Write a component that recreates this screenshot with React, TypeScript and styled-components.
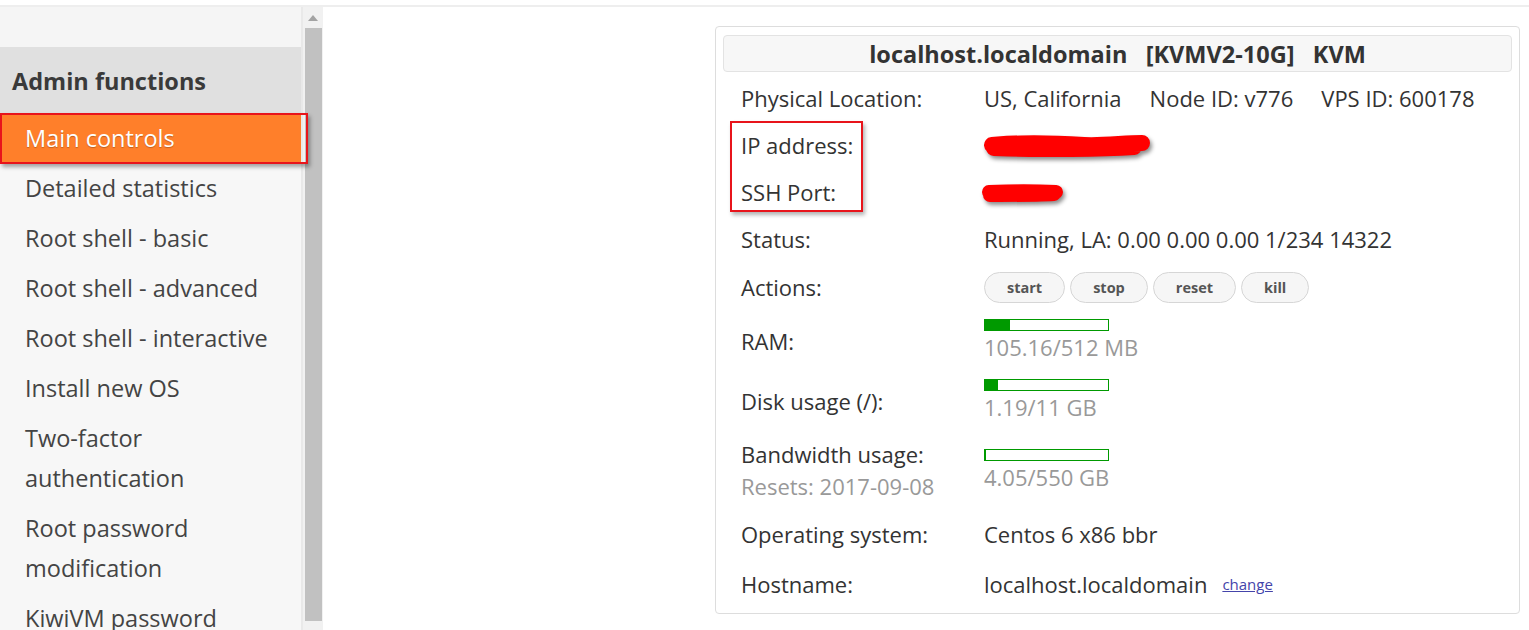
import React from 'react';
import styled, { createGlobalStyle } from 'styled-components';

const GlobalStyle = createGlobalStyle`
  html, body {
    margin: 0;
    padding: 0;
    background: #ffffff;
    overflow: hidden;
  }
  body {
    font-family: 'Open Sans', 'Noto Sans', sans-serif;
    color: #333;
  }
`;

const Page = styled.div`
  height: 630px;
  display: flex;
  flex-direction: column;
  padding-top: 5px;
  box-sizing: border-box;
`;

const Layout = styled.div`
  flex: 1;
  display: flex;
  border-top: 2px solid #eeeeee;
  overflow: hidden;
`;

const Sidebar = styled.aside`
  display: flex;
  flex-shrink: 0;
`;

const SidePanel = styled.nav`
  width: 301px;
  background: #f7f7f7;
  border-right: 2px solid #e9e9e9;
`;

const SideSpacer = styled.div`
  height: 40px;
  background: #f5f5f5;
`;

const SideHeader = styled.div`
  height: 66px;
  display: flex;
  align-items: center;
  padding: 2px 0 0 12px;
  box-sizing: border-box;
  background: #e0e0e0;
  font-size: 23.5px;
  font-weight: 700;
  color: #3a3a3a;
`;

const NavItem = styled.div<{ $active?: boolean }>`
  position: relative;
  padding: 5px 10px 5px 25px;
  line-height: 40px;
  font-size: 23.5px;
  color: ${({ $active }) => ($active ? '#ffffff' : '#444444')};
  background: ${({ $active }) => ($active ? '#ff7f2a' : 'transparent')};
  text-shadow: ${({ $active }) => ($active ? '0 1px 1px rgba(0,0,0,0.25)' : 'none')};
`;

const NavMark = styled.span`
  position: absolute;
  left: 0;
  right: -7px;
  top: 0;
  bottom: -1px;
  border: 2px solid #e8141b;
  box-shadow: 2px 3px 4px rgba(0, 0, 0, 0.35);
  pointer-events: none;
`;

const ScrollBar = styled.div`
  width: 20px;
  background: #f1f1f1;
  display: flex;
  flex-direction: column;
  align-items: center;
  padding-bottom: 9px;
`;

const ScrollArrow = styled.div`
  margin: 8px 0 7px;
  width: 0;
  height: 0;
  border-left: 5px solid transparent;
  border-right: 5px solid transparent;
  border-bottom: 6px solid #a3a3a3;
`;

const ScrollThumb = styled.div`
  flex: 1;
  width: 17px;
  margin-left: 1px;
  background: #c1c1c1;
`;

const Main = styled.main`
  flex: 1;
  display: flex;
  justify-content: flex-end;
  align-items: flex-start;
  padding: 19px 9px 0 0;
`;

const Card = styled.section`
  width: 805px;
  box-sizing: border-box;
  border: 1px solid #dddddd;
  border-radius: 4px;
  padding: 8px 7px 5px;
`;

const CardTitle = styled.h2`
  margin: 0;
  height: 37px;
  box-sizing: border-box;
  border: 1px solid #e3e3e3;
  border-radius: 4px;
  background: #f7f7f7;
  display: flex;
  align-items: center;
  justify-content: center;
  font-size: 23.5px;
  font-weight: 700;
  color: #333;
  white-space: pre;
`;

const InfoBody = styled.div`
  position: relative;
  padding: 3px 18px 0;
`;

const Row = styled.div<{ $extraTop?: number }>`
  display: grid;
  grid-template-columns: 243px 1fr;
  align-items: center;
  padding: ${({ $extraTop = 0 }) => 10 + $extraTop}px 0 10px;
  font-size: 22px;
  line-height: 27px;
  color: #333;
`;

const Label = styled.div``;

const SubLabel = styled.div`
  margin-top: 5px;
  color: #999;
`;

const Value = styled.div`
  display: flex;
  align-items: center;
`;

const Part = styled.span`
  margin-right: 28px;
`;

const Buttons = styled.div`
  display: flex;
  gap: 5px;
  margin: -1.5px 0;
`;

const ActionButton = styled.button`
  height: 31px;
  padding: 0 22px;
  border: 1px solid #d6d6d6;
  border-radius: 16px;
  background: #f6f6f6;
  font-family: 'Open Sans', 'Noto Sans', sans-serif;
  font-size: 14.5px;
  font-weight: 700;
  color: #555;
  cursor: pointer;
`;

const Usage = styled.div`
  display: flex;
  flex-direction: column;
  align-items: flex-start;
  margin-top: -2px;
`;

const Bar = styled.div`
  width: 125px;
  height: 12px;
  box-sizing: border-box;
  border: 1px solid #009a00;
  margin-bottom: 3px;
`;

const BarFill = styled.div`
  height: 100%;
  background: #009a00;
`;

const UsageText = styled.div`
  color: #999;
`;

const ChangeLink = styled.a`
  margin-left: 15px;
  font-size: 15px;
  color: #4444aa;
  text-decoration: underline;
`;

const Redaction = styled.svg`
  display: block;
  overflow: visible;
  filter: drop-shadow(2px 3px 2px rgba(0, 0, 0, 0.45));
`;

const LabelMark = styled.span`
  position: absolute;
  left: 7px;
  top: 49px;
  width: 129px;
  height: 87px;
  border: 2px solid #e8141b;
  box-shadow: 2px 3px 4px rgba(0, 0, 0, 0.3);
  pointer-events: none;
`;

const navItems = [
  'Detailed statistics',
  'Root shell - basic',
  'Root shell - advanced',
  'Root shell - interactive',
  'Install new OS',
  'Two-factor authentication',
  'Root password modification',
  'KiwiVM password modification',
];

interface UsageBarProps {
  used: number;
  total: number;
  unit: string;
}

const UsageBar: React.FC<UsageBarProps> = ({ used, total, unit }) => (
  <Usage>
    <Bar>
      <BarFill style={{ width: `${Math.max((used / total) * 100, 1)}%` }} />
    </Bar>
    <UsageText>
      {used}/{total} {unit}
    </UsageText>
  </Usage>
);

const App: React.FC = () => {
  return (
    <>
      <GlobalStyle />
      <Page>
        <Layout>
          <Sidebar>
            <SidePanel>
              <SideSpacer />
              <SideHeader>Admin functions</SideHeader>
              <NavItem $active>
                Main controls
                <NavMark />
              </NavItem>
              {navItems.map((item) => (
                <NavItem key={item}>{item}</NavItem>
              ))}
            </SidePanel>
            <ScrollBar>
              <ScrollArrow />
              <ScrollThumb />
            </ScrollBar>
          </Sidebar>

          <Main>
            <Card>
              <CardTitle>{'localhost.localdomain   [KVMV2-10G]   KVM'}</CardTitle>
              <InfoBody>
                <LabelMark />
                <Row>
                  <Label>Physical Location:</Label>
                  <Value>
                    <Part>US, California</Part>
                    <Part>Node ID: v776</Part>
                    <span>VPS ID: 600178</span>
                  </Value>
                </Row>
                <Row>
                  <Label>IP address:</Label>
                  <Value>
                    <Redaction width="166" height="18" viewBox="0 0 166 18">
                      <path
                        d="M8 8 C40 5 70 6 100 8 C120 9 140 6 158 6 M10 11 C60 13 120 12 150 10"
                        stroke="#ff0000"
                        strokeWidth="16"
                        strokeLinecap="round"
                        fill="none"
                      />
                    </Redaction>
                  </Value>
                </Row>
                <Row>
                  <Label>SSH Port:</Label>
                  <Value>
                    <Redaction width="80" height="16" viewBox="0 0 80 16">
                      <path
                        d="M5 7 C30 6 50 6 72 7 M6 10 C30 10 55 10 70 9"
                        stroke="#ff0000"
                        strokeWidth="14"
                        strokeLinecap="round"
                        fill="none"
                      />
                    </Redaction>
                  </Value>
                </Row>
                <Row>
                  <Label>Status:</Label>
                  <Value>Running, LA: 0.00 0.00 0.00 1/234 14322</Value>
                </Row>
                <Row>
                  <Label>Actions:</Label>
                  <Buttons>
                    <ActionButton>start</ActionButton>
                    <ActionButton>stop</ActionButton>
                    <ActionButton>reset</ActionButton>
                    <ActionButton>kill</ActionButton>
                  </Buttons>
                </Row>
                <Row>
                  <Label>RAM:</Label>
                  <UsageBar used={105.16} total={512} unit="MB" />
                </Row>
                <Row>
                  <Label>Disk usage (/):</Label>
                  <UsageBar used={1.19} total={11} unit="GB" />
                </Row>
                <Row>
                  <Label>
                    Bandwidth usage:
                    <SubLabel>Resets: 2017-09-08</SubLabel>
                  </Label>
                  <UsageBar used={4.05} total={550} unit="GB" />
                </Row>
                <Row $extraTop={1}>
                  <Label>Operating system:</Label>
                  <Value>Centos 6 x86 bbr</Value>
                </Row>
                <Row $extraTop={3}>
                  <Label>Hostname:</Label>
                  <Value>
                    localhost.localdomain
                    <ChangeLink href="#">change</ChangeLink>
                  </Value>
                </Row>
              </InfoBody>
            </Card>
          </Main>
        </Layout>
      </Page>
    </>
  );
};

export default App;
